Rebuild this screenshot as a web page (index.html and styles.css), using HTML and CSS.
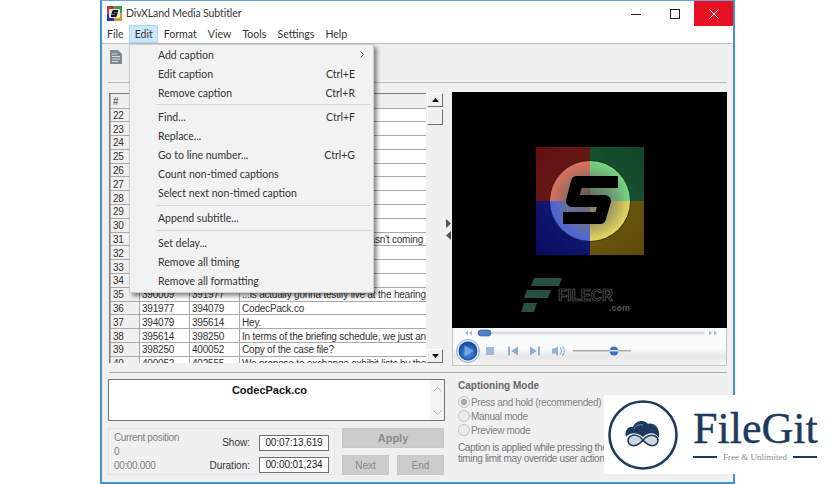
FILE: index.html
```html
<!DOCTYPE html>
<html lang="en">
<head>
<meta charset="utf-8">
<title>DivXLand Media Subtitler</title>
<link rel="stylesheet" href="styles.css">
</head>
<body>
<div class="window">
  <header class="titlebar">
    <svg class="app-icon" width="15" height="15" viewBox="0 0 15 15">
      <rect width="7.5" height="7.5" fill="#c0392b"/><rect x="7.5" width="7.5" height="7.5" fill="#2f9e57"/>
      <rect y="7.5" width="7.5" height="7.5" fill="#2536a8"/><rect x="7.5" y="7.5" width="7.5" height="7.5" fill="#c9a227"/>
      <rect x="2" y="3" width="11" height="9" rx="1" fill="#e8e8e8"/>
      <path d="M11 5H6.5L5.5 7.5H9.5L8.5 10H4" fill="none" stroke="#111" stroke-width="2"/>
    </svg>
    <span class="title">DivXLand Media Subtitler</span>
    <div class="controls">
      <span class="ctl"><svg width="10" height="10" viewBox="0 0 10 10"><path d="M0 5.5H10" stroke="#222" stroke-width="1"/></svg></span>
      <span class="ctl"><svg width="10" height="10" viewBox="0 0 10 10"><rect x=".5" y=".5" width="9" height="9" fill="none" stroke="#222"/></svg></span>
      <span class="ctl close"><svg width="10" height="10" viewBox="0 0 10 10"><path d="M.5.5L9.5 9.5M9.5.5L.5 9.5" stroke="#fff" stroke-width="1"/></svg></span>
    </div>
  </header>
  <nav class="menubar">
    <span class="mi">File</span><span class="mi active">Edit</span><span class="mi">Format</span><span class="mi">View</span><span class="mi">Tools</span><span class="mi">Settings</span><span class="mi">Help</span>
  </nav>
  <div class="client">
    <div class="toolbar">
      <svg width="12" height="14" viewBox="0 0 12 14"><path d="M0 0H8L12 4V14H0Z" fill="#7e8b94"/><path d="M2 4H7M2 6.5H10M2 9H10M2 11.5H8" stroke="#d5dadd" stroke-width="1"/></svg>
    </div>
    <div class="upper">
      <div class="list-wrap">
        <div class="list">
          <table class="grid">
            <colgroup><col class="c1"><col class="c2"><col class="c3"><col></colgroup>
            <tr class="head"><th>#</th><th></th><th></th><th></th></tr>
            <tr><td>22</td><td></td><td></td><td></td></tr>
            <tr><td>23</td><td></td><td></td><td></td></tr>
            <tr><td>24</td><td></td><td></td><td></td></tr>
            <tr><td>25</td><td></td><td></td><td></td></tr>
            <tr><td>26</td><td></td><td></td><td></td></tr>
            <tr><td>27</td><td></td><td></td><td></td></tr>
            <tr><td>28</td><td></td><td></td><td></td></tr>
            <tr><td>29</td><td></td><td></td><td></td></tr>
            <tr><td>30</td><td></td><td></td><td></td></tr>
            <tr><td>31</td><td></td><td></td><td class="tail">wasn't coming</td></tr>
            <tr><td>32</td><td></td><td></td><td></td></tr>
            <tr><td>33</td><td></td><td></td><td></td></tr>
            <tr><td>34</td><td></td><td></td><td></td></tr>
            <tr><td>35</td><td>390009</td><td>391977</td><td>...is actually gonna testify live at the hearing</td></tr>
            <tr><td>36</td><td>391977</td><td>394079</td><td>CodecPack.co</td></tr>
            <tr><td>37</td><td>394079</td><td>395614</td><td>Hey.</td></tr>
            <tr><td>38</td><td>395614</td><td>398250</td><td>In terms of the briefing schedule, we just an</td></tr>
            <tr><td>39</td><td>398250</td><td>400052</td><td>Copy of the case file?</td></tr>
            <tr><td>40</td><td>400052</td><td>402555</td><td>We propose to exchange exhibit lists by the</td></tr>
          </table>
        </div>
        <div class="vscroll">
          <span class="sbtn"><svg width="7" height="4" viewBox="0 0 7 4"><path d="M3.5 0L7 4H0Z" fill="#111"/></svg></span>
          <span class="thumb"></span>
          <span class="spacer"></span>
          <span class="sbtn"><svg width="7" height="4" viewBox="0 0 7 4"><path d="M0 0H7L3.5 4Z" fill="#111"/></svg></span>
        </div>
      </div>
      <div class="splitter">
        <svg width="5" height="22" viewBox="0 0 5 22"><path d="M0 0L5 4.5L0 9Z" fill="#555"/><path d="M5 12V21L0 16.500Z" fill="#555"/></svg>
      </div>
      <div class="media">
        <svg class="video" width="275" height="236" viewBox="0 0 275 236">
          <defs>
            <radialGradient id="gr" gradientUnits="userSpaceOnUse" cx="138" cy="109" r="40"><stop offset="0" stop-color="#5a5250"/><stop offset=".6" stop-color="#9a6a60"/><stop offset="1" stop-color="#e0705c"/></radialGradient>
            <radialGradient id="gg" gradientUnits="userSpaceOnUse" cx="138" cy="109" r="40"><stop offset="0" stop-color="#5a6a5a"/><stop offset=".6" stop-color="#6f9f74"/><stop offset="1" stop-color="#74d880"/></radialGradient>
            <radialGradient id="gb" gradientUnits="userSpaceOnUse" cx="138" cy="109" r="40"><stop offset="0" stop-color="#6a6a70"/><stop offset=".6" stop-color="#66709a"/><stop offset="1" stop-color="#4a64e0"/></radialGradient>
            <radialGradient id="gy" gradientUnits="userSpaceOnUse" cx="138" cy="109" r="40"><stop offset="0" stop-color="#77745c"/><stop offset=".6" stop-color="#a8a060"/><stop offset="1" stop-color="#e6d860"/></radialGradient>
            <linearGradient id="qr" x1="0" y1="0" x2="1" y2="1"><stop offset="0" stop-color="#640f0f"/><stop offset="1" stop-color="#64201c"/></linearGradient>
            <linearGradient id="qg" x1="1" y1="0" x2="0" y2="1"><stop offset="0" stop-color="#0f4428"/><stop offset="1" stop-color="#1a5a34"/></linearGradient>
            <linearGradient id="qb" x1="0" y1="1" x2="1" y2="0"><stop offset="0" stop-color="#080c60"/><stop offset="1" stop-color="#141e78"/></linearGradient>
            <linearGradient id="qy" x1="1" y1="1" x2="0" y2="0"><stop offset="0" stop-color="#5e4a08"/><stop offset="1" stop-color="#705c12"/></linearGradient>
          </defs>
          <rect width="275" height="236" fill="#000"/>
          <rect x="84" y="55" width="54" height="54" fill="url(#qr)"/>
          <rect x="138" y="55" width="54" height="54" fill="url(#qg)"/>
          <rect x="84" y="109" width="54" height="54" fill="url(#qb)"/>
          <rect x="138" y="109" width="54" height="54" fill="url(#qy)"/>
          <circle cx="138" cy="109" r="41" fill="#222" opacity=".55"/>
          <path d="M138 69A40 40 0 0 0 98 109H138Z" fill="url(#gr)"/>
          <path d="M138 69A40 40 0 0 1 178 109H138Z" fill="url(#gg)"/>
          <path d="M138 149A40 40 0 0 1 98 109H138Z" fill="url(#gb)"/>
          <path d="M138 149A40 40 0 0 0 178 109H138Z" fill="url(#gy)"/>
          <path d="M166 90H125L120 109H153L148 126H111" fill="none" stroke="#000" stroke-width="12" stroke-linejoin="round"/>
          <path d="M82 186H110L107 194H79ZM75 198H99L96 206H72ZM72 211H85L82 220H69Z" fill="#2a5040"/>
          <text class="wm" x="106" y="209" textLength="55" lengthAdjust="spacingAndGlyphs">FILECR</text>
          <text class="wm-small" x="157" y="219">.com</text>
        </svg>
        <svg class="player" width="275" height="38" viewBox="0 0 275 38">
          <defs>
            <linearGradient id="pbg" x1="0" y1="0" x2="0" y2="1"><stop offset="0" stop-color="#f8fafc"/><stop offset=".55" stop-color="#fbfbfb"/><stop offset=".75" stop-color="#e8e8e8"/><stop offset="1" stop-color="#f6f6f6"/></linearGradient>
            <radialGradient id="pb" cx=".5" cy=".6" r=".6"><stop offset="0" stop-color="#4d93e8"/><stop offset="1" stop-color="#123f94"/></radialGradient>
          </defs>
          <rect x=".5" y="-1" width="274" height="38.500" fill="url(#pbg)" stroke="#c4c4c4"/>
          <path d="M13 5L16 2.500V7.500ZM17 5L20 2.500V7.500ZM257 2.500L260 5L257 7.500ZM262 2.500L265 5L262 7.500Z" fill="#9db9d8"/>
          <rect x="30" y="4" width="222" height="2" fill="#e2e2e2" stroke="#c8c8c8" stroke-width=".5"/>
          <rect x="26" y="2" width="13" height="6" rx="3" fill="#4d7fc9" stroke="#2e5ea8" stroke-width=".7"/>
          <circle cx="16" cy="23" r="11.500" fill="#dce6f2" stroke="#9cb1cc"/>
          <circle cx="16" cy="23" r="9.500" fill="url(#pb)"/>
          <path d="M12.500 17.500L21.500 23L12.500 28.500Z" fill="#6ea6ea"/>
          <rect x="34" y="19" width="8" height="8" fill="#9fbada"/>
          <path d="M56 18.500H58V27.500H56ZM66 18.500V27.500L59 23ZM78 18.500L85 23L78 27.500ZM86 18.500H88V27.500H86Z" fill="#8fb0d6"/>
          <path d="M100 20.500H103L106 18V28L103 25.500H100Z" fill="#8fb0d6"/>
          <path d="M108 19.500Q111 23 108 26.500M110.500 18Q114 23 110.500 28" fill="none" stroke="#8fb0d6" stroke-width="1.200"/>
          <rect x="121" y="22" width="58" height="1.500" fill="#aaa"/>
          <circle cx="162" cy="23" r="4.500" fill="#3c73c4"/>
          <rect x="157" y="22" width="10" height="1.500" fill="#cfdcee"/>
        </svg>
      </div>
    </div>
    <hr class="rule">
    <div class="lower">
      <div class="lower-left">
        <div class="caption">
          <div class="caption-text">CodecPack.co</div>
          <div class="caption-scroll">
            <svg width="9" height="5" viewBox="0 0 9 5"><path d="M.5 4.500L4.500 .5L8.500 4.500" fill="none" stroke="#b5b5b5"/></svg>
            <svg width="9" height="5" viewBox="0 0 9 5"><path d="M.5 .5L4.500 4.500L8.500 .5" fill="none" stroke="#b5b5b5"/></svg>
          </div>
        </div>
        <div class="controls-row">
          <div class="panel">
            <div class="position">
              <div>Current position</div><div>0</div><div>00:00.000</div>
            </div>
            <div class="timing">
              <label class="field-label">Show:</label><span class="time">00:07:13,619</span>
              <label class="field-label">Duration:</label><span class="time">00:00:01,234</span>
            </div>
          </div>
          <div class="actions">
            <button class="btn apply">Apply</button>
            <div class="btn-row"><button class="btn">Next</button><button class="btn">End</button></div>
          </div>
        </div>
      </div>
      <div class="mode">
        <div class="mode-title">Captioning Mode</div>
        <div class="radio"><span class="dot on"></span>Press and hold (recommended)</div>
        <div class="radio"><span class="dot"></span>Manual mode</div>
        <div class="radio"><span class="dot"></span>Preview mode</div>
        <p class="hint">Caption is applied while pressing the<br>timing limit may override user action</p>
      </div>
    </div>
    <div class="menu">
      <div class="row"><span>Add caption</span><svg width="4" height="7" viewBox="0 0 4 7"><path d="M.5 .5L3.500 3.500L.5 6.500" fill="none" stroke="#555"/></svg></div>
      <div class="row"><span>Edit caption</span><span>Ctrl+E</span></div>
      <div class="row"><span>Remove caption</span><span>Ctrl+R</span></div>
      <div class="sep tight"></div>
      <div class="row"><span>Find...</span><span>Ctrl+F</span></div>
      <div class="row"><span>Replace...</span></div>
      <div class="row"><span>Go to line number...</span><span>Ctrl+G</span></div>
      <div class="row"><span>Count non-timed captions</span></div>
      <div class="row"><span>Select next non-timed caption</span></div>
      <div class="sep"></div>
      <div class="row"><span>Append subtitle...</span></div>
      <div class="sep"></div>
      <div class="row"><span>Set delay...</span></div>
      <div class="row"><span>Remove all timing</span></div>
      <div class="row"><span>Remove all formatting</span></div>
    </div>
  </div>
</div>
<aside class="badge">
  <svg width="72" height="72" viewBox="0 0 72 72">
    <circle cx="36" cy="36" r="33.500" fill="#fff" stroke="#1c3a5e" stroke-width="2.600"/>
    <path d="M19 38C17 31 22 27 26 28C28 21 38 20 41 25C46 23 52 28 52 34L52 39C48 33 42 33 36 38C30 33 23 33 19 38Z" fill="#1c3a5e"/>
    <path d="M27 30C29 26 33 25 36 26" fill="none" stroke="#8fa3b8" stroke-width=".8"/>
    <path d="M36 41C32 36 27 35 24 37C20 39 20 44 24 46C28 48 33 45 36 41C39 37 44 35 48 37C52 39 52 44 48 46C44 48 39 45 36 41Z" fill="#cfd6de" stroke="#1c3a5e" stroke-width="1.500"/>
  </svg>
  <div class="brand">
    <div class="brand-name">FileGit</div>
    <div class="brand-sub"><span class="dash"></span><span>Free &amp; Unlimited</span><span class="dash"></span></div>
  </div>
</aside>
</body>
</html>
```

FILE: styles.css
```css
* { box-sizing: border-box; }
html, body { margin: 0; height: 484px; overflow: hidden; background: #fff; }
body { font-family: "Liberation Sans", sans-serif; font-size: 10px; color: #222; position: relative; }

.window {
  position: relative;
  width: 635px;
  height: 484px;
  margin-left: 100px;
  border-style: solid;
  border-width: 1px 2px 2px 2px;
  border-color: #6aa3d5 #3f94cf #3f94cf #3f94cf;
  display: flex;
  flex-direction: column;
  background: #fff;
}

.titlebar { height: 24px; display: flex; align-items: center; padding-left: 5px; flex: none; }
.app-icon { margin-right: 4px; }
.title { font-family: Lato, sans-serif; font-size: 10.500px; letter-spacing: -.1px; color: #333; }
.controls { margin-left: auto; display: flex; align-self: flex-start; }
.ctl { width: 39px; height: 25px; display: flex; align-items: center; justify-content: center; }
.close { background: #e81123; }

.menubar { height: 19px; display: flex; flex: none; border-bottom: 1px solid #bdbdbd; font-family: Lato, sans-serif; }
.mi { padding: 0 4.600px; height: 18px; line-height: 17px; font-size: 10.500px; color: #333; border: 1px solid transparent; }
.mi:first-child { padding-left: 4px; }
.active { background: #cce8ff; border-color: #a8d8fa; }

.client { position: relative; flex: 1; background: #f0f0f0; display: flex; flex-direction: column; padding: 0 6px; min-height: 0; }

.toolbar { height: 39px; border-bottom: 1px solid #b9b9b9; padding: 6px 0 0 2px; flex: none; }

.upper { display: flex; padding-top: 9px; height: 289px; flex: none; padding-left: 1px; }

.list-wrap { display: flex; width: 335px; margin-top: 1px; height: 270px; flex: none; }
.list { width: 318px; height: 270px; overflow: hidden; background: #fff; border: 1px solid #808080; border-bottom: none; border-right: none; }
.grid { width: 317px; table-layout: fixed; border-collapse: collapse; font-size: 10px; letter-spacing: -.2px; color: #333; }
.c1 { width: 29px; }
.c2 { width: 50px; }
.c3 { width: 50px; }
.grid tr { height: 13.800px; }
.grid th, .grid td {
  padding: 1px 0 0 2px;
  height: 13.800px;
  line-height: 11px;
  border: 1px solid #a9a9a9;
  border-top: none;
  white-space: nowrap;
  overflow: hidden;
  text-align: left;
  font-weight: normal;
}
.grid td:first-child, .grid th:first-child { background: #f0f0f0; }
.grid .head th { background: #f0f0f0; height: 14px; }
.grid td.tail { text-align: right; padding-right: 3px; }

.vscroll { width: 17px; margin-left: 1px; display: flex; flex-direction: column; background: #f0f0f0; }
.sbtn { height: 14px; width: 16px; display: flex; align-items: center; justify-content: center; background: #f0f0f0; border: 1px solid; border-color: #fff #707070 #707070 #fff; flex: none; }
.thumb { height: 16px; width: 16px; margin-top: 2px; background: #f0f0f0; border: 1px solid; border-color: #fff #707070 #707070 #fff; flex: none; }
.spacer { flex: 1; }

.splitter { width: 5px; margin: 0 1px 0 2px; padding-top: 127px; flex: none; }
.splitter svg { display: block; }

.media { display: flex; flex-direction: column; width: 275px; flex: none; }
.video, .player { display: block; flex: none; }
.wm { font-size: 16px; font-weight: bold; fill: #000; stroke: #666; stroke-width: .7; }
.wm-small { font-size: 9px; font-weight: bold; fill: #555; }

.rule { margin: 0 0 0 1px; border: none; border-top: 1px solid #a9a9a9; height: 1px; flex: none; }

.lower { display: flex; padding-top: 6px; flex: 1; min-height: 0; }
.lower-left { width: 337px; flex: none; display: flex; flex-direction: column; }
.caption { height: 42px; background: #fff; border: 1px solid #707070; display: flex; flex: none; }
.caption-text { flex: 1; text-align: center; font-weight: bold; font-size: 11px; color: #111; line-height: 20px; }
.caption-scroll { width: 14px; background: #f3f3f3; display: flex; flex-direction: column; justify-content: space-between; align-items: center; padding: 7px 0 5px; }
.caption-scroll svg { display: block; }

.controls-row { display: flex; margin-top: 7px; }
.panel { width: 227px; height: 47px; border: 1px solid #e4e4e4; display: flex; padding: 2px 5px 0; justify-content: space-between; }
.position { color: #808080; line-height: 14px; letter-spacing: -.35px; }
.timing { display: grid; grid-template-columns: auto 70px; column-gap: 9px; row-gap: 5px; align-items: center; margin-top: 3px; }
.field-label { text-align: right; color: #333; }
.time { height: 16px; width: 70px; background: #fff; border: 1px solid #707070; line-height: 14px; text-align: center; color: #222; letter-spacing: -.1px; }

.actions { margin-left: 7px; width: 102px; display: flex; flex-direction: column; gap: 7px; }
.btn { height: 20px; width: 47px; background: #cccccc; border: 1px solid #c8c8c8; color: #8a8a8a; font: inherit; padding: 0; }
.apply { width: 102px; font-weight: bold; font-size: 11px; }
.btn-row { display: flex; justify-content: space-between; }

.mode { margin-left: 13px; flex: 1; color: #777; }
.mode-title { font-weight: bold; color: #666; line-height: 13px; margin-bottom: 3px; }
.radio { display: flex; align-items: center; height: 14px; color: #808080; white-space: nowrap; letter-spacing: -.35px; }
.dot { width: 12px; height: 12px; border-radius: 50%; border: 1px solid #c4c4c4; background: #ececec; margin-right: 1px; flex: none; }
.on { background: radial-gradient(circle, #aaa 0 3px, #ececec 3.500px); }
.hint { margin: 5px 0 0; line-height: 11px; white-space: nowrap; letter-spacing: -.35px; }

.menu {
  position: absolute;
  left: 27px;
  top: 0;
  width: 245px;
  height: 249px;
  background: #f2f2f2;
  border: 1px solid #cfcfcf;
  box-shadow: 3px 3px 4px rgba(0,0,0,.45);
  padding: 0 18px 0 28px;
  font-family: Lato, sans-serif;
  font-size: 10.500px;
  color: #333;
}
.row { height: 19px; display: flex; justify-content: space-between; align-items: center; white-space: nowrap; }
.row svg { margin-right: -9px; }
.sep { height: 1px; background: #d9d9d9; margin: 2.500px -16px 2.500px -2px; }
.tight { margin-top: 2px; margin-bottom: 2px; }

.badge {
  position: absolute;
  left: 604px;
  top: 395px;
  width: 232px;
  height: 79px;
  background: #fff;
  display: flex;
  align-items: center;
  padding-left: 3px;
}
.brand { margin-left: 14px; width: 124px; color: #1c3a5e; }
.brand-name { font-family: "Liberation Serif", serif; font-size: 44px; line-height: 42px; white-space: nowrap; -webkit-text-stroke: .4px #1c3a5e; }
.brand-sub { display: flex; align-items: center; justify-content: space-between; font-family: "Liberation Serif", serif; font-size: 9px; color: #8c8c8c; white-space: nowrap; margin-top: 2px; }
.dash { width: 24px; height: 2px; background: #1c3a5e; }
```
